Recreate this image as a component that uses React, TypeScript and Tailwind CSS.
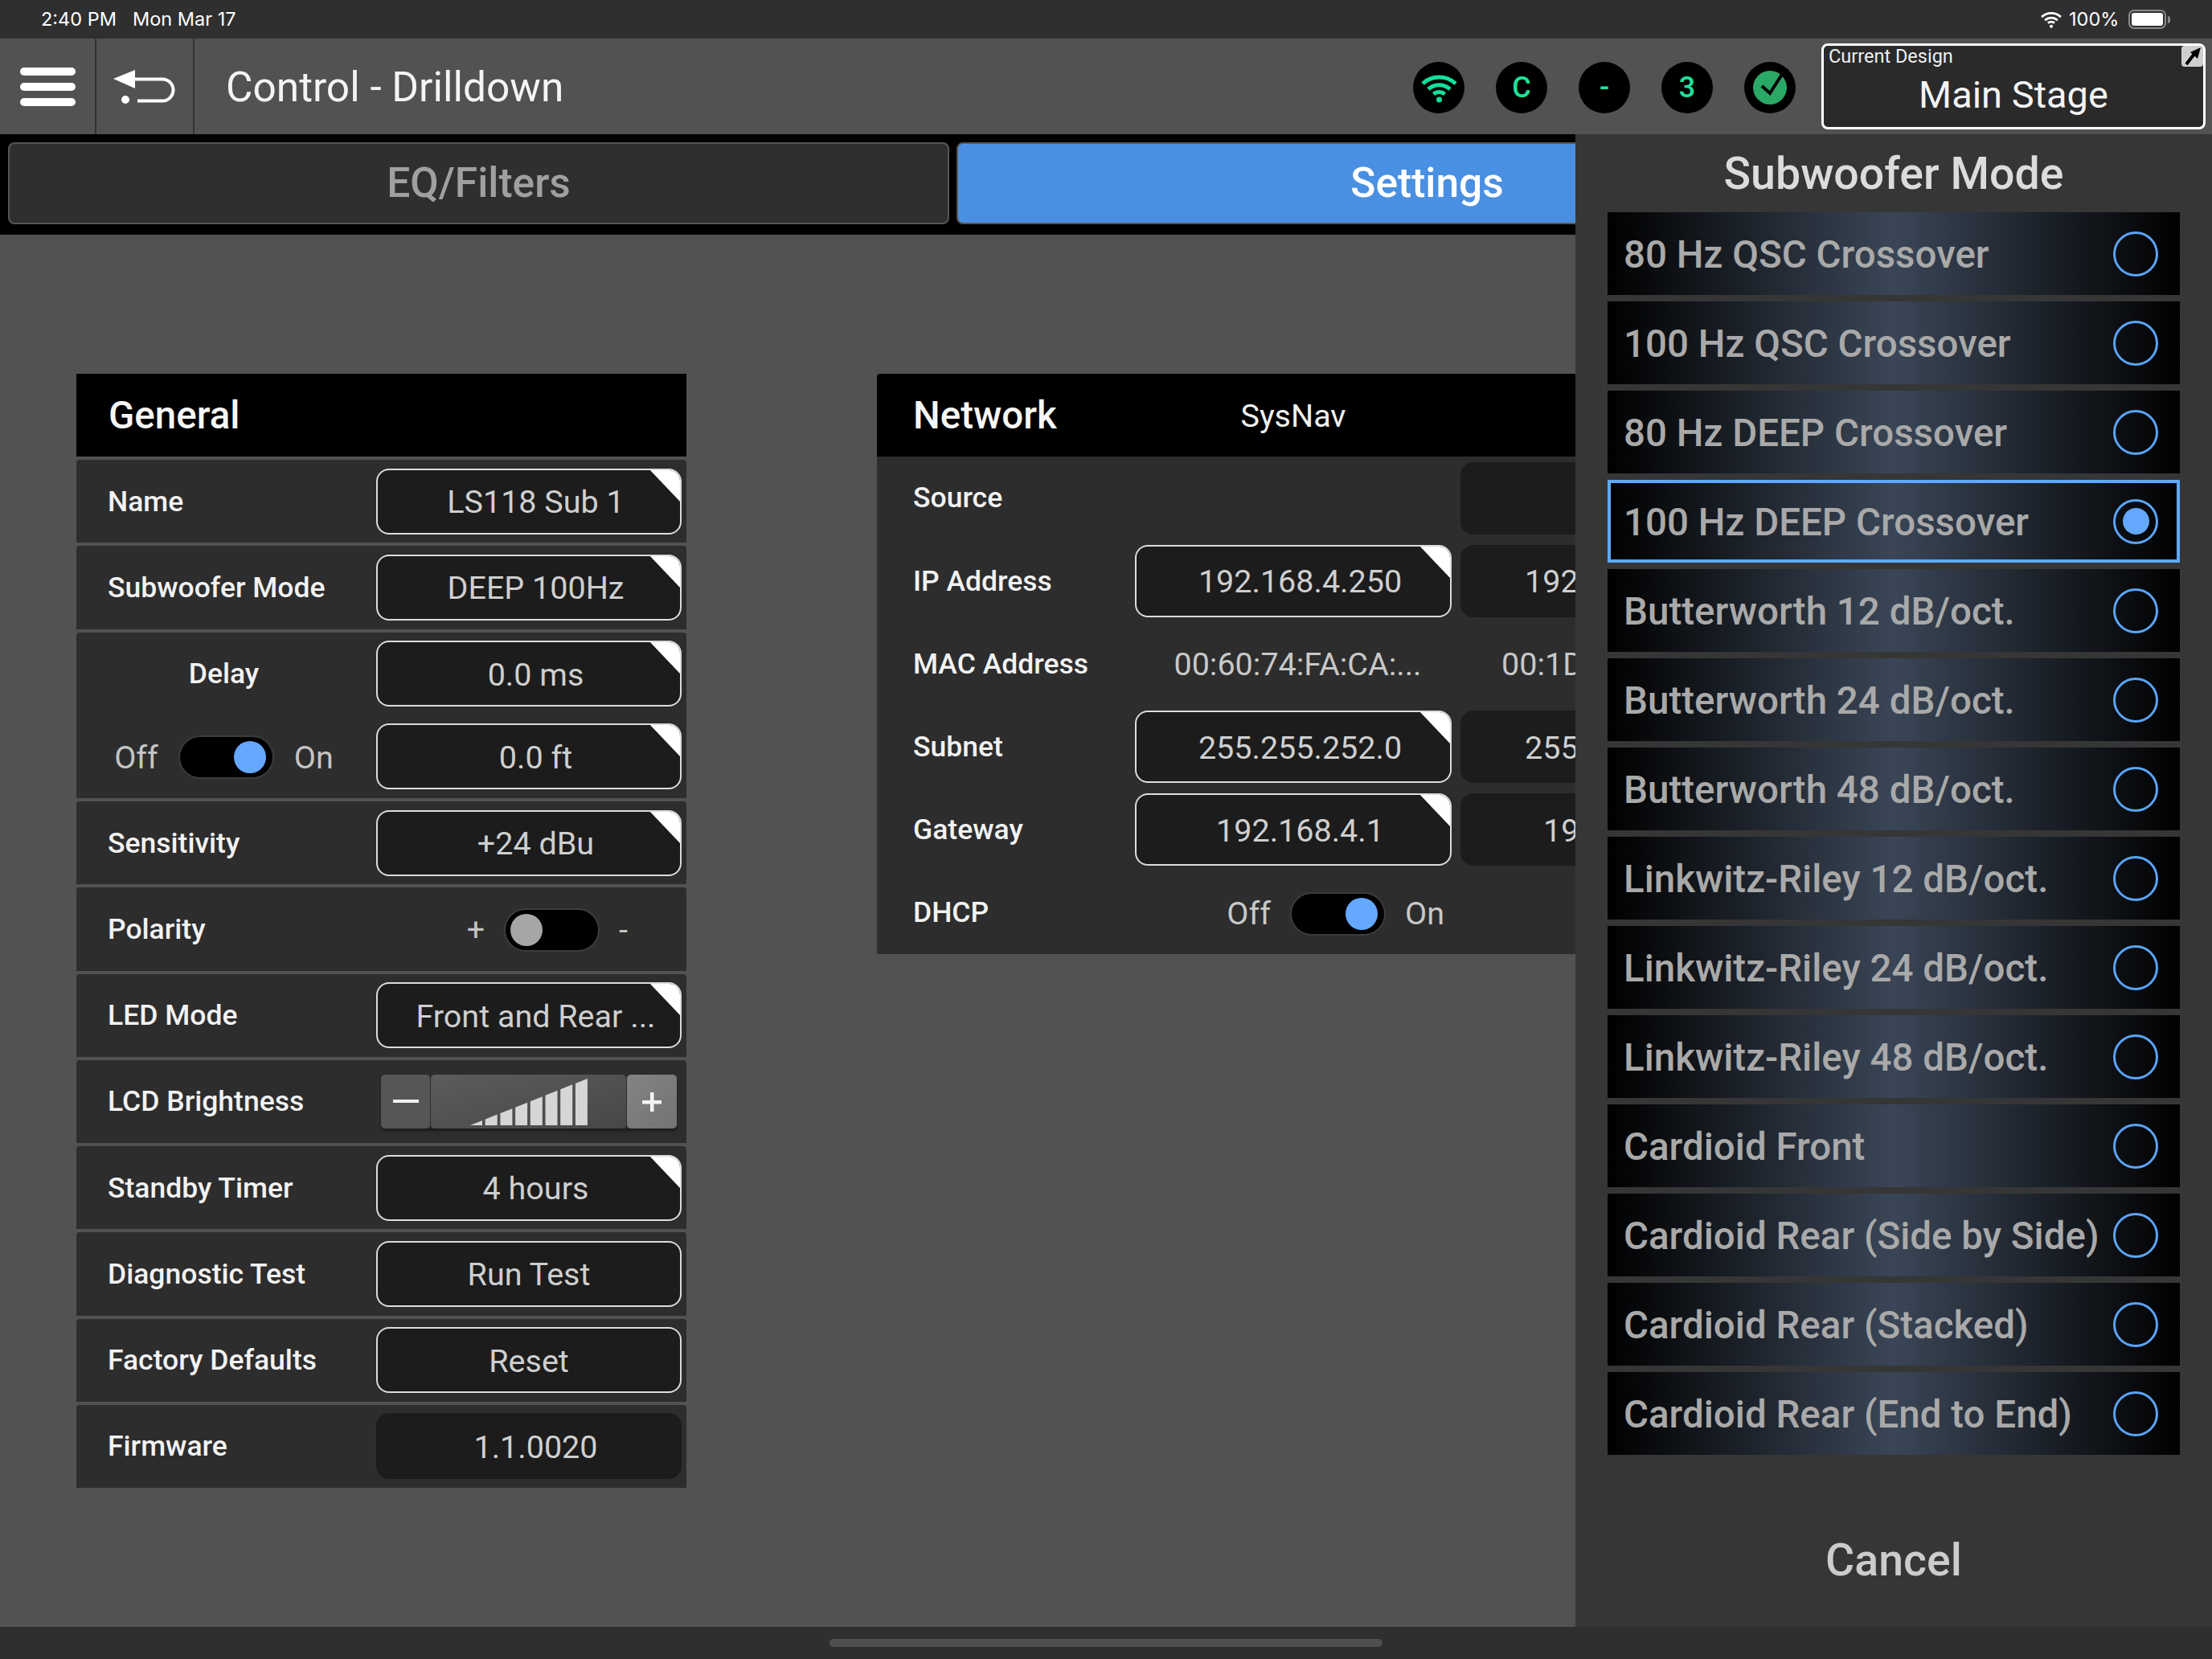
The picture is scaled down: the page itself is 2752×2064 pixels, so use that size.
import React from 'react';

const MODES = [
  '80 Hz QSC Crossover',
  '100 Hz QSC Crossover',
  '80 Hz DEEP Crossover',
  '100 Hz DEEP Crossover',
  'Butterworth 12 dB/oct.',
  'Butterworth 24 dB/oct.',
  'Butterworth 48 dB/oct.',
  'Linkwitz-Riley 12 dB/oct.',
  'Linkwitz-Riley 24 dB/oct.',
  'Linkwitz-Riley 48 dB/oct.',
  'Cardioid Front',
  'Cardioid Rear (Side by Side)',
  'Cardioid Rear (Stacked)',
  'Cardioid Rear (End to End)',
];

const WifiIcon: React.FC<{ color: string; className: string }> = ({ color, className }) => (
  <svg viewBox="0 0 45 38" className={className} fill="none" stroke={color} strokeWidth="5">
    <path d="M2 14 A30 30 0 0 1 43 14" />
    <path d="M9 21 A20 20 0 0 1 36 21" />
    <path d="M15.5 27 A11 11 0 0 1 29.5 27" />
    <circle cx="22.5" cy="34" r="3.5" fill={color} stroke="none" />
  </svg>
);

const Corner = () => (
  <div className="absolute -top-[2px] right-0 w-0 h-0 border-l-[39px] border-l-transparent border-t-[41px] border-t-white" />
);

const Field: React.FC<{
  text: string;
  corner?: boolean;
  noBorder?: boolean;
  centered?: boolean;
  className?: string;
}> = ({ text, corner, noBorder, centered, className }) => (
  <div
    className={`relative shrink-0 overflow-hidden rounded-[16px] bg-[#1c1c1c] flex items-center justify-center pt-[2px] text-[39.5px] text-[#cfcfcf] whitespace-nowrap ${
      noBorder ? '' : 'border-2 border-[#dcdcdc]'
    } ${centered ? '' : 'pl-[17px]'} ${className ?? 'w-[380px] h-[82px]'}`}
  >
    {text}
    {corner && <Corner />}
  </div>
);

// second network column, only its left end shows beside the open sheet
const SideField: React.FC<{ text: string; className: string }> = ({ text, className }) => (
  <div className={`w-[394px] h-[90px] shrink-0 rounded-[16px] bg-[#1c1c1c] flex items-center pt-[2px] text-[39.5px] text-[#cfcfcf] ${className}`}>
    {text}
  </div>
);

const Toggle: React.FC<{ on?: boolean }> = ({ on }) => (
  <div
    className={`w-[119px] h-[54px] rounded-full bg-black border-2 border-[#3c3c3c] flex items-center ${
      on ? 'justify-end pr-[8px]' : 'justify-start pl-[6px]'
    }`}
  >
    <div className={`w-[40px] h-[40px] rounded-full ${on ? 'bg-[#64a8ff]' : 'bg-[#a6a6a6]'}`} />
  </div>
);

const Row: React.FC<{ label: string; children: React.ReactNode }> = ({ label, children }) => (
  <div className="h-[103.25px] rounded-t-[4px] bg-[#2d2d2d] flex items-center justify-between pl-[39px] pr-[6px]">
    <span className="pt-[1px] text-[35.5px] font-medium text-[#f2f2f2]">{label}</span>
    {children}
  </div>
);

const Brightness = () => {
  const bars = [0, 1, 2, 3, 4, 5, 6, 7];
  return (
    <div className="w-[368px] h-[67px] mr-[6px] flex gap-[1px] rounded-[5px] shadow-[0_3px_3px_#1c1c1c]">
      <div className="w-[61px] rounded-[5px] bg-[#565656] flex items-center justify-center">
        <div className="w-[32px] h-[4px] bg-[#f0f0f0]" />
      </div>
      <div className="flex-1 rounded-[5px] bg-gradient-to-br from-[#5c5c5c] to-[#474747] pl-[49px] pt-[5px]">
        <svg width="148" height="60" viewBox="0 0 148 60">
          {bars.map((i) => {
            const x = i * 18.7;
            const y1 = 58 - x * 0.398;
            const y2 = 58 - (x + 15) * 0.398;
            return <polygon key={i} points={`${x},58 ${x},${y1} ${x + 15},${y2} ${x + 15},58`} fill="#d6d6d6" />;
          })}
        </svg>
      </div>
      <div className="w-[62px] rounded-[5px] bg-gradient-to-br from-[#848484] to-[#737373] flex items-center justify-center pt-[2px]">
        <svg width="24" height="24" viewBox="0 0 24 24" fill="#f4f4f4">
          <rect x="10" y="0" width="4.5" height="24" />
          <rect x="0" y="10" width="24" height="4.5" />
        </svg>
      </div>
    </div>
  );
};

const NetRow: React.FC<{ label: string; children?: React.ReactNode }> = ({ label, children }) => (
  <div className="h-[103.2px] flex items-center">
    <span className="w-[321px] pl-[45px] pt-[1px] shrink-0 text-[35.5px] font-medium text-[#f2f2f2]">{label}</span>
    <div className="flex gap-[11px] items-center">{children}</div>
  </div>
);

const netField = 'w-[394px] h-[90px]';

export default function App() {
  return (
    <div className="relative w-[2752px] h-[2064px] overflow-hidden flex flex-col bg-[#525252] text-white font-[Roboto,sans-serif]">
      {/* status bar */}
      <div className="h-[48px] shrink-0 bg-[#2f2f2f] flex items-center pl-[51px] pr-[52px] text-[23.5px] text-white font-[Inter,sans-serif]">
        <span className="w-[114px]">2:40 PM</span>
        <span>Mon Mar 17</span>
        <WifiIcon color="#ffffff" className="ml-auto w-[30px] h-[22px]" />
        <span className="ml-[7px] w-[74px]">100%</span>
        <div className="w-[47px] h-[24px] rounded-[7px] border-2 border-[#8a8a8a] p-[2px]">
          <div className="w-full h-full rounded-[3px] bg-white" />
        </div>
        <div className="w-[3px] h-[9px] ml-[2px] rounded-r-full bg-[#8a8a8a]" />
      </div>

      {/* header */}
      <div className="h-[119px] shrink-0 bg-[#525252] flex items-center">
        <div className="w-[120px] h-full border-r-2 border-[#333333] flex flex-col items-center justify-center gap-[9px]">
          <div className="w-[69px] h-[10px] rounded-full bg-white" />
          <div className="w-[69px] h-[10px] rounded-full bg-white" />
          <div className="w-[69px] h-[10px] rounded-full bg-white" />
        </div>
        <div className="w-[122px] h-full border-r-2 border-[#333333] flex items-center justify-center pt-[2px]">
          <svg width="78" height="44" viewBox="0 0 78 44" fill="none">
            <polygon points="0,11 27,0 27,23" fill="#ffffff" />
            <path d="M25 11.5 H61 A13.5 13.5 0 0 1 61 38.5 H30" stroke="#ffffff" strokeWidth="4" />
            <circle cx="15" cy="37" r="5" fill="#ffffff" />
          </svg>
        </div>
        <div className="pl-[39px] pt-[2px] text-[51.4px] text-[#f4f4f4] whitespace-nowrap">Control - Drilldown</div>
        <div className="ml-auto pt-[3px] flex items-center gap-[39px] text-[36px] font-medium text-[#1de39a]">
          <div className="w-[64px] h-[64px] rounded-full bg-black flex items-center justify-center">
            <WifiIcon color="#12e09a" className="w-[45px] h-[38px]" />
          </div>
          <div className="w-[64px] h-[64px] rounded-full bg-black flex items-center justify-center">C</div>
          <div className="w-[64px] h-[64px] rounded-full bg-black flex items-center justify-center">-</div>
          <div className="w-[64px] h-[64px] rounded-full bg-black flex items-center justify-center">3</div>
          <div className="w-[64px] h-[64px] rounded-full bg-black flex items-center justify-center">
            <svg width="42" height="42" viewBox="0 0 42 42">
              <circle cx="21" cy="21" r="21" fill="#2ca866" />
              <path d="M11 19 L21 28 L37 3" fill="none" stroke="#000000" strokeWidth="4" />
            </svg>
          </div>
        </div>
        <div className="relative ml-[32px] mr-[8px] w-[478px] h-[107px] rounded-[8px] border-[3px] border-white bg-[#2a2a2a] flex flex-col">
          <span className="pl-[6px] text-[23.5px] leading-[26px] text-[#f0f0f0]">Current Design</span>
          <span className="pt-[7px] text-center text-[47px] leading-[56px] text-[#f4f4f4]">Main Stage</span>
          <div className="absolute top-0 right-0 w-[27px] h-[26px] rounded-[4px] bg-[#cfcfcf] flex items-center justify-center">
            <svg width="24" height="24" viewBox="0 0 24 24">
              <path d="M4 22 L14 9" stroke="#000000" strokeWidth="4" fill="none" />
              <polygon points="22,1 9,7 18,15" fill="#000000" />
            </svg>
          </div>
        </div>
      </div>

      {/* tabs */}
      <div className="h-[125px] shrink-0 bg-black flex gap-[9px] pl-[10px] pt-[10px]">
        <div className="w-[1171px] h-[102px] shrink-0 rounded-[8px] border-2 border-[#565656] bg-[#2f2f2f] flex items-center justify-center text-[51.5px] font-medium text-[#a0a0a0]">
          EQ/Filters
        </div>
        <div className="w-[1171px] h-[102px] shrink-0 rounded-[8px] border-2 border-[#565656] bg-[#4a90e2] flex items-center justify-center text-[51.5px] font-medium text-white">
          Settings
        </div>
      </div>

      {/* settings */}
      <div className="flex-1 flex items-start pt-[173px] pl-[95px] gap-[237px]">
        <div className="w-[759px] shrink-0 flex flex-col gap-[4px]">
          <div className="h-[103px] pt-[2px] bg-black flex items-center pl-[40px] text-[47.5px] font-medium text-[#f6f6f6]">General</div>
          <Row label="Name"><Field text="LS118 Sub 1" corner /></Row>
          <Row label="Subwoofer Mode"><Field text="DEEP 100Hz" corner /></Row>
          <div className="h-[206.5px] rounded-t-[4px] bg-[#2d2d2d] flex flex-col">
            <div className="h-[103.25px] flex items-center justify-between pr-[6px]">
              <span className="w-[367px] text-center text-[35.5px] font-medium text-[#f2f2f2]">Delay</span>
              <Field text="0.0 ms" corner />
            </div>
            <div className="h-[103.25px] flex items-center justify-between pr-[6px]">
              <div className="w-[367px] flex items-center justify-center gap-[25px] pt-[2px] text-[39.5px] text-[#c4c4c4]">
                <span>Off</span>
                <Toggle on />
                <span>On</span>
              </div>
              <Field text="0.0 ft" corner />
            </div>
          </div>
          <Row label="Sensitivity"><Field text="+24 dBu" corner /></Row>
          <Row label="Polarity">
            <div className="flex items-center gap-[24px] pr-[67px] pt-[2px] text-[39.5px] text-[#c4c4c4]">
              <span>+</span>
              <Toggle />
              <span>-</span>
            </div>
          </Row>
          <Row label="LED Mode"><Field text="Front and Rear ..." corner /></Row>
          <Row label="LCD Brightness"><Brightness /></Row>
          <Row label="Standby Timer"><Field text="4 hours" corner /></Row>
          <Row label="Diagnostic Test"><Field text="Run Test" centered /></Row>
          <Row label="Factory Defaults"><Field text="Reset" centered /></Row>
          <Row label="Firmware"><Field text="1.1.0020" noBorder /></Row>
        </div>

        <div className="w-[1149px] shrink-0 flex flex-col">
          <div className="h-[103px] rounded-t-[4px] bg-black flex items-center pl-[45px]">
            <span className="w-[276px] pt-[2px] text-[47.5px] font-medium text-[#f6f6f6]">Network</span>
            <span className="w-[394px] pt-[2px] text-center text-[39.5px] text-[#f0f0f0]">SysNav</span>
          </div>
          <div className="bg-[#2d2d2d] flex flex-col">
            <NetRow label="Source">
              <div className="w-[394px]" />
              <SideField text="" className="pl-[80px]" />
            </NetRow>
            <NetRow label="IP Address">
              <Field text="192.168.4.250" corner className={netField} />
              <SideField text="192" className="pl-[80px]" />
            </NetRow>
            <NetRow label="MAC Address">
              <div className="w-[394px] pt-[2px] pl-[11px] text-center text-[39.5px] text-[#c8c8c8] whitespace-nowrap">00:60:74:FA:CA:...</div>
              <div className="w-[394px] pt-[2px] pl-[51px] text-[39.5px] text-[#c8c8c8] whitespace-nowrap">00:1D</div>
            </NetRow>
            <NetRow label="Subnet">
              <Field text="255.255.252.0" corner className={netField} />
              <SideField text="255" className="pl-[80px]" />
            </NetRow>
            <NetRow label="Gateway">
              <Field text="192.168.4.1" corner className={netField} />
              <SideField text="19" className="pl-[103px]" />
            </NetRow>
            <NetRow label="DHCP">
              <div className="w-[394px] flex items-center justify-end gap-[24px] pr-[9px] pt-[2px] text-[39.5px] text-[#c8c8c8]">
                <span>Off</span>
                <Toggle on />
                <span>On</span>
              </div>
            </NetRow>
          </div>
        </div>
      </div>

      {/* home bar */}
      <div className="h-[40px] shrink-0 bg-[#2f2f2f] flex items-center justify-center">
        <div className="w-[688px] h-[10px] rounded-full bg-[#4f4f4f]" />
      </div>

      {/* subwoofer mode sheet */}
      <div className="absolute top-[167px] right-0 bottom-[40px] w-[792px] bg-[#363636] flex flex-col">
        <div className="h-[97px] shrink-0 pt-[2px] flex items-center justify-center text-[55.5px] font-medium text-[#dcdcdc]">Subwoofer Mode</div>
        <div className="flex flex-col gap-[8px] px-[40px]">
          {MODES.map((mode) => {
            const selected = mode === '100 Hz DEEP Crossover';
            return (
              <div
                key={mode}
                className={`h-[103px] flex items-center justify-between pl-[20px] pr-[27px] bg-[linear-gradient(90deg,#000000_0%,#3a4657_50%,#000000_100%)] text-[47.5px] font-medium text-[#a9a9a9] whitespace-nowrap ${
                  selected ? 'ring-4 ring-inset ring-[#5fa8ff]' : ''
                }`}
              >
                <span className="pt-[4px]">{mode}</span>
                <div className="w-[56px] h-[56px] rounded-full border-[3.5px] border-[#5aa4f8] flex items-center justify-center">
                  {selected && <div className="w-[33px] h-[33px] rounded-full bg-[#64a8ff]" />}
                </div>
              </div>
            );
          })}
        </div>
        <div className="mt-[102px] h-[60px] flex items-center justify-center text-[55.5px] font-medium text-[#cccccc]">Cancel</div>
      </div>
    </div>
  );
}
